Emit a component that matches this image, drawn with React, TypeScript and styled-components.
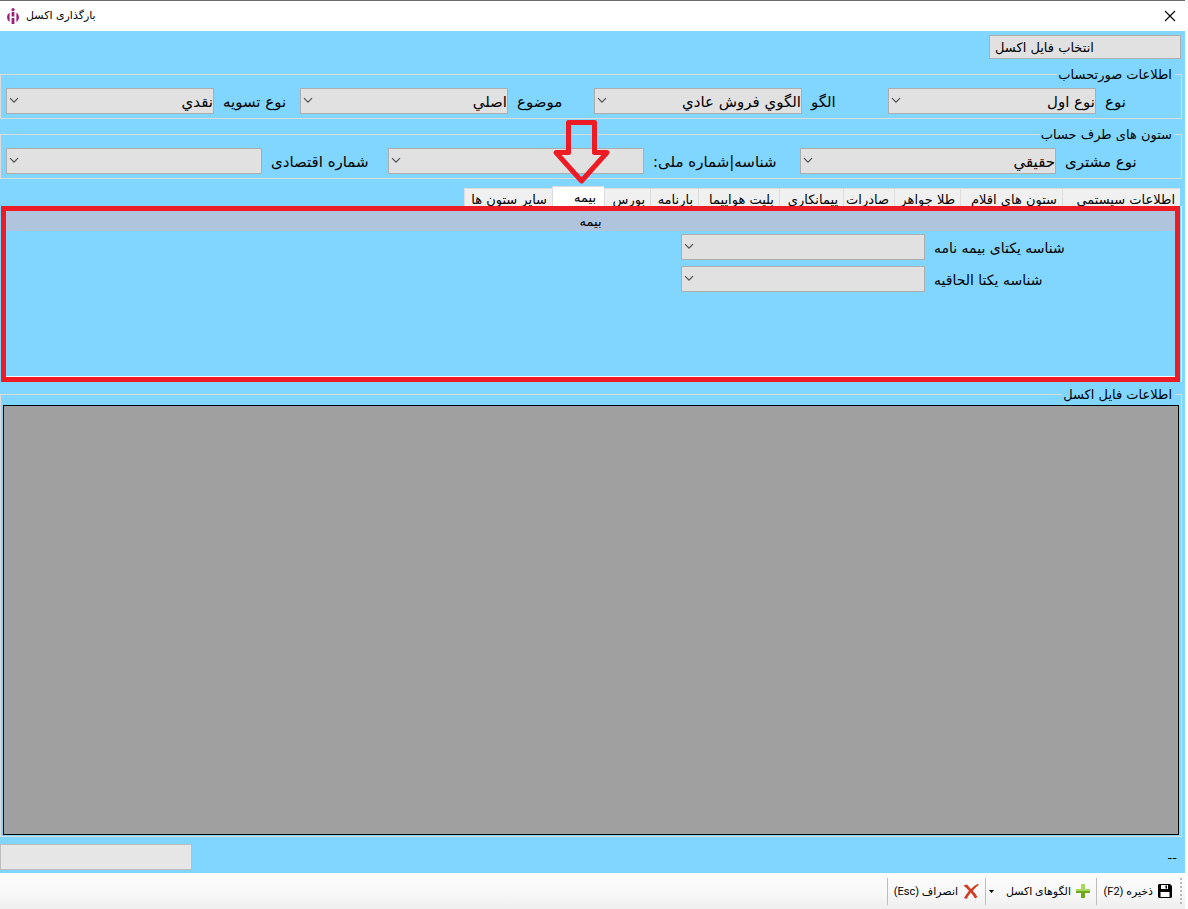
import React, { useId, useState } from "react";
import styled, { createGlobalStyle } from "styled-components";

const color = {
  sky: "#80d6ff",
  control: "#e1e1e1",
  controlBorder: "#adadad",
  line: "#dcdcdc",
  band: "#b0c4de",
  red: "#ed1c24",
  text: "#000",
};

const GlobalStyle = createGlobalStyle`
  * { box-sizing: border-box; }
  body {
    margin: 0;
    background: #fff;
    color: ${color.text};
    font-family: "DejaVu Sans", sans-serif;
    font-size: 13px;
  }
  button, select, input { font: inherit; color: inherit; }
`;

const Window = styled.div`
  display: flex;
  flex-direction: column;
  min-height: 100vh;
  margin-right: 3px;
  background: ${color.sky};
`;

const TitleBar = styled.header`
  display: flex;
  align-items: center;
  gap: 7px;
  height: 31px;
  padding: 0 9px 0 7px;
  border-top: 1px solid #6b6b6b;
  background: #fff;
`;

const Title = styled.h1`
  flex: 1;
  margin: 0;
  font-size: 11px;
  font-weight: 400;
  line-height: 16px;
`;

const CloseButton = styled.button`
  display: flex;
  padding: 0;
  border: 0;
  background: none;
`;

const Content = styled.main`
  flex: 1;
  display: flex;
  flex-direction: column;
  gap: 7px;
  padding: 4px 3px 0 0;
`;

const PickFile = styled.button`
  width: 192px;
  height: 24px;
  margin-right: 1px;
  padding: 0 5px;
  border: 1px solid ${color.controlBorder};
  background: ${color.control};
  text-align: left;
`;

const Group = styled.fieldset`
  min-width: 0;
  margin: 0;
  padding: 6px 0 4px 5px;
  border: 1px solid ${color.line};
`;

const Legend = styled.legend`
  height: 16px;
  margin-right: 6px;
  padding: 0 3px 0 1px;
  line-height: 18px;
`;

const FieldGrid = styled.div<{ $columns: string }>`
  display: grid;
  grid-template-columns: ${(p) => p.$columns};
  margin-right: -1px;
`;

const FieldRow = styled.div`
  display: flex;
`;

const FieldLabel = styled.label<{ $small?: boolean }>`
  flex: 1;
  height: 26px;
  padding-left: 9px;
  font-size: ${(p) => (p.$small ? 14 : 15)}px;
  line-height: 28px;
  text-align: left;
  white-space: nowrap;
`;

const SelectBox = styled.span<{ $width: number }>`
  position: relative;
  width: ${(p) => p.$width}px;
  height: 26px;

  svg {
    position: absolute;
    left: 3px;
    top: 9px;
    pointer-events: none;
  }
`;

const Select = styled.select`
  appearance: none;
  display: block;
  width: 100%;
  height: 26px;
  padding: 2px 0 0 20px;
  border: 1px solid ${color.controlBorder};
  border-radius: 0;
  background: ${color.control};
  font-size: 15px;
`;

const TabArea = styled.section`
  margin-bottom: -3px;
`;

const TabList = styled.div`
  display: flex;
  align-items: flex-end;
  height: 20px;
  padding-right: 2px;
`;

const Tab = styled.button<{ $width: number; $active: boolean }>`
  position: relative;
  flex: none;
  width: ${(p) => p.$width}px;
  height: ${(p) => (p.$active ? 20 : 18)}px;
  padding: 0 ${(p) => (p.$active ? 8 : 5)}px;
  border: 1px solid ${color.line};
  border-width: 1px 0 0 1px;
  background: ${(p) => (p.$active ? "#fff" : "#f0f0f0")};
  line-height: 22px;
  text-align: right;
  white-space: nowrap;
`;

const Arrow = styled.svg`
  position: absolute;
  left: -2px;
  bottom: 100%;
  z-index: 1;
  pointer-events: none;
`;

const PanelEdge = styled.div`
  padding: 0 1px;
  border-right: 1px solid #f4f4f4;
`;

const Panel = styled.div`
  position: relative;
  height: 176px;
  border: 5px solid ${color.red};
  box-shadow: inset 0 -1px 0 #fff;
`;

const Band = styled.h2`
  height: 20px;
  margin: 0 0 3px;
  background: ${color.band};
  font-size: 13px;
  font-weight: 400;
  line-height: 22px;
  text-align: center;
`;

const PanelFields = styled.div`
  display: flex;
  flex-direction: column;
  gap: 6px;
  width: 494px;
`;

const SheetGroup = styled.section`
  flex: 1;
  display: flex;
  flex-direction: column;
  margin-top: 8px;
  padding: 0 2px 1px;
  border: 1px solid ${color.line};
`;

const SheetHeading = styled.h2`
  align-self: flex-start;
  height: 16px;
  margin: -9px 4px 3px 0;
  padding: 0 3px 0 1px;
  background: ${color.sky};
  font-size: 13px;
  font-weight: 400;
  line-height: 18px;
`;

const Sheet = styled.div`
  flex: 1;
  border: 1px solid #000;
  background: #a0a0a0;
`;

const StatusRow = styled.div`
  display: flex;
  justify-content: space-between;
  align-items: center;
  padding: 0 5px 3px 0;
`;

const StatusBox = styled.input`
  width: 192px;
  height: 26px;
  border: 1px solid #bcbcbc;
  background: #e6e6e6;
`;

const Toolbar = styled.footer`
  display: flex;
  align-items: center;
  height: 36px;
  padding-right: 3px;
  background: linear-gradient(#fdfdfd, #f7f7f7 60%, #eee);
`;

const Grip = styled.span`
  width: 2px;
  height: 27px;
  margin-left: 2px;
  background: repeating-linear-gradient(#b8b8b8 0 2px, transparent 2px 4px);
`;

const ToolButton = styled.button<{ $width: number }>`
  display: flex;
  align-items: center;
  gap: 5px;
  width: ${(p) => p.$width}px;
  height: 27px;
  padding: 0 6px 0 3px;
  border: 0;
  border-left: 1px solid #bdbdbd;
  background: none;
  font-family: Roboto, "DejaVu Sans", sans-serif;
  font-size: 11px;
  white-space: nowrap;

  svg { flex: none; }
`;

const ToolText = styled.span`
  flex: 1;
  text-align: right;
`;

function Chevron() {
  return (
    <svg width="10" height="7" viewBox="0 0 10 7" fill="none" stroke="#505050" strokeWidth="1.2" aria-hidden="true">
      <path d="M1 1.2 5 5.2 9 1.2" />
    </svg>
  );
}

type FieldProps = { label: string; value?: string; width: number; small?: boolean };

function Field({ label, value = "", width, small }: FieldProps) {
  const id = useId();
  return (
    <FieldRow>
      <FieldLabel htmlFor={id} $small={small}>{label}</FieldLabel>
      <SelectBox $width={width}>
        <Select id={id} defaultValue={value}>
          <option value={value}>{value}</option>
        </Select>
        <Chevron />
      </SelectBox>
    </FieldRow>
  );
}

const tabs = [
  { label: "اطلاعات سیستمی", width: 118 },
  { label: "ستون های اقلام", width: 102 },
  { label: "طلا جواهر", width: 66 },
  { label: "صادرات", width: 51 },
  { label: "پیمانکاری", width: 64 },
  { label: "بلیت هواپیما", width: 81 },
  { label: "بارنامه", width: 48 },
  { label: "بورس", width: 46 },
  { label: "بیمه", width: 52 },
  { label: "سایر ستون ها", width: 88 },
];

export default function App() {
  const [active, setActive] = useState(8);
  return (
    <>
      <GlobalStyle />
      <Window dir="rtl" lang="fa">
        <TitleBar dir="ltr">
          <svg width="12" height="16" viewBox="0 0 12 16" fill="#9b1f7a" aria-hidden="true">
            <circle cx="6" cy="1.700" r="1.600" />
            <path d="M4.600 4h2.800v4.500H4.600zM4.600 10h2.800v6H4.600zM2.600 4.500v9.500Q0 12.500 0 9.300T2.600 4.500zM9.400 4.500v9.500Q12 12.500 12 9.300T9.400 4.500z" />
          </svg>
          <Title>بارگذاری اکسل</Title>
          <CloseButton aria-label="بستن">
            <svg width="12" height="12" viewBox="0 0 12 12" stroke="#000" strokeWidth="1.1" aria-hidden="true">
              <path d="M1 1 11 11M11 1 1 11" />
            </svg>
          </CloseButton>
        </TitleBar>

        <Content>
          <PickFile>انتخاب فایل اکسل</PickFile>

          <Group>
            <Legend>اطلاعات صورتحساب</Legend>
            <FieldGrid $columns="repeat(4, 1fr)">
              <Field label="نوع" value="نوع اول" width={208} />
              <Field label="الگو" value="الگوي فروش عادي" width={208} />
              <Field label="موضوع" value="اصلي" width={208} />
              <Field label="نوع تسویه" value="نقدي" width={208} />
            </FieldGrid>
          </Group>

          <Group>
            <Legend>ستون های طرف حساب</Legend>
            <FieldGrid $columns="382fr 412fr 382fr">
              <Field label="نوع مشتری" value="حقيقي" width={256} />
              <Field label="شناسه|شماره ملی:" width={256} />
              <Field label="شماره اقتصادی" width={256} />
            </FieldGrid>
          </Group>

          <TabArea>
            <TabList role="tablist">
              {tabs.map((tab, i) => (
                <Tab
                  key={tab.label}
                  role="tab"
                  aria-selected={i === active}
                  $active={i === active}
                  $width={tab.width}
                  onClick={() => setActive(i)}
                >
                  {tab.label}
                  {i === active && (
                    <Arrow width="60" height="68" viewBox="0 0 60 68" fill="none" stroke={color.red} strokeWidth="5" strokeLinejoin="round" aria-hidden="true">
                      <path d="M17.500 3.500H43.500V33.500H56L30.500 62 5 33.500H17.500Z" />
                    </Arrow>
                  )}
                </Tab>
              ))}
            </TabList>
            <PanelEdge>
              <Panel role="tabpanel">
                <Band>بیمه</Band>
                <PanelFields>
                  <Field label="شناسه یکتای بیمه نامه" width={244} small />
                  <Field label="شناسه یکتا الحاقیه" width={244} small />
                </PanelFields>
              </Panel>
            </PanelEdge>
          </TabArea>

          <SheetGroup>
            <SheetHeading>اطلاعات فایل اکسل</SheetHeading>
            <Sheet />
          </SheetGroup>

          <StatusRow>
            <span>--</span>
            <StatusBox aria-label="وضعیت" readOnly />
          </StatusRow>
        </Content>

        <Toolbar>
          <Grip />
          <ToolButton $width={82}>
            <svg width="14" height="14" viewBox="0 0 14 14" aria-hidden="true">
              <path fill="#000" d="M1 0h11l2 2v11l-1 1H1l-1-1V1z" />
              <path fill="#fff" d="M3 1h7v4H3zM2.500 8h9v5h-9z" />
              <path fill="#000" d="M7.500 1.500h1.500v3H7.500z" />
            </svg>
            <ToolText>ذخیره (F2)</ToolText>
          </ToolButton>
          <ToolButton $width={111}>
            <svg width="14" height="14" viewBox="0 0 14 14" aria-hidden="true">
              <path fill="#6fa81c" d="M5 0h4v5h5v4H9v5H5V9H0V5h5z" />
              <path fill="#a9d65c" d="M5 0h4v5h5v2H0V5h5z" />
            </svg>
            <ToolText>الگوهای اکسل</ToolText>
            <svg width="5" height="3" viewBox="0 0 5 3" aria-hidden="true">
              <path d="M0 0h5L2.500 3z" />
            </svg>
          </ToolButton>
          <ToolButton $width={98}>
            <svg width="16" height="15" viewBox="0 0 16 15" fill="#d23a22" aria-hidden="true">
              <path d="M0.500 1.500 4 0.500Q6 3 8 5 11 1.500 14.500 0L16 0.800Q12.500 3 9.800 6.800 12 9 14.500 13L12 14.500Q10 11 7.800 8.500 5.500 11.500 3.500 15L1 14Q3.500 10 6 6.800 3.500 4 0.500 1.500z" />
            </svg>
            <ToolText>انصراف (Esc)</ToolText>
          </ToolButton>
        </Toolbar>
      </Window>
    </>
  );
}
